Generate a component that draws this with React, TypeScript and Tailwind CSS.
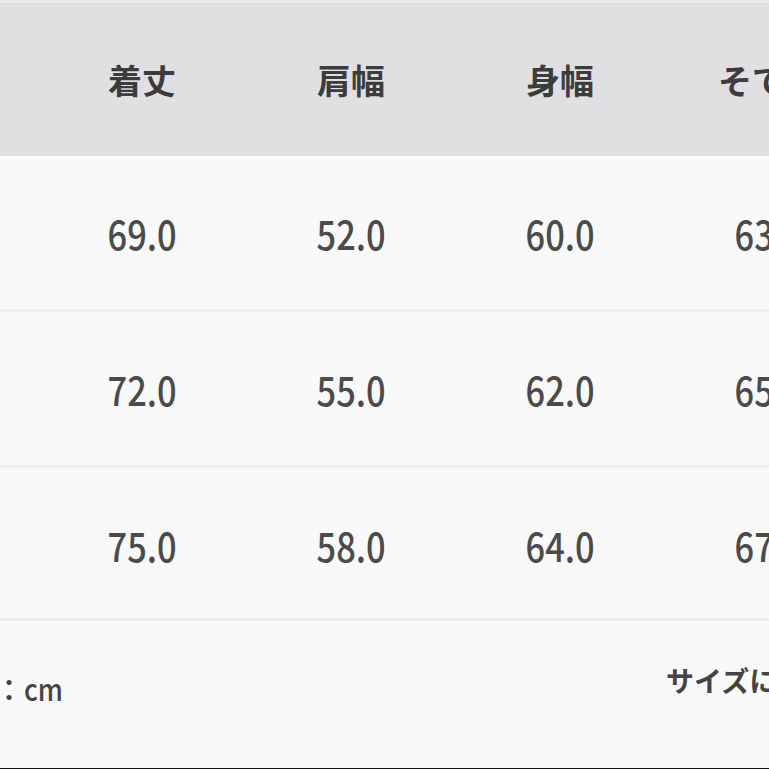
const headers = ["着丈", "肩幅", "身幅", "そで丈"];

const rows = [
  ["69.0", "52.0", "60.0", "63.0"],
  ["72.0", "55.0", "62.0", "65.0"],
  ["75.0", "58.0", "64.0", "67.0"],
];

const font = "font-['Noto_Sans_CJK_JP','Noto_Sans',sans-serif]";

function Row({ cells, header }: { cells: string[]; header?: boolean }) {
  return (
    <div className="grid grid-cols-[37.5px_209px_209px_209px_209px] items-center h-full">
      <div />
      {cells.map((c) => (
        <div key={c} className="flex justify-center">
          {header ? (
            <span className="text-[34px] font-bold leading-none text-[#3c3c3c] whitespace-nowrap">
              {c}
            </span>
          ) : (
            <span className="inline-block scale-x-[0.86] text-[40px] font-medium leading-none text-[#4b4b4b] whitespace-nowrap">
              {c}
            </span>
          )}
        </div>
      ))}
    </div>
  );
}

export default function App() {
  return (
    <div className={`w-[769px] h-[769px] overflow-hidden bg-[#f9f9f9] flex flex-col ${font}`}>
      <div className="h-[3px] bg-[#ebebeb]" />
      <div className="h-[153px] bg-[#e0e0e2]">
        <Row cells={headers} header />
      </div>
      {rows.map((r, i) => (
        <div key={i} className="flex flex-col">
          <div className={`${i === 2 ? "h-[150px] pt-[4px]" : "h-[153px]"} bg-[#f9f9f9]`}>
            <Row cells={r} />
          </div>
          <div className="h-[3px] bg-[#eeeeee]" />
        </div>
      ))}
      <div className="flex-1 flex items-start justify-between pt-[44px] overflow-hidden">
        <div className="ml-[-66px] flex items-baseline text-[#444] font-medium whitespace-nowrap">
          <span className="text-[30px]">単位：</span>
          <span className="inline-block origin-left scale-x-[0.86] text-[31px]">cm</span>
        </div>
        <div className="w-[103px] overflow-hidden whitespace-nowrap text-[28px] font-bold text-[#444] leading-none pt-[1px]">
          サイズについて
        </div>
      </div>
      <div className="h-[1px] bg-[#111]" />
    </div>
  );
}
